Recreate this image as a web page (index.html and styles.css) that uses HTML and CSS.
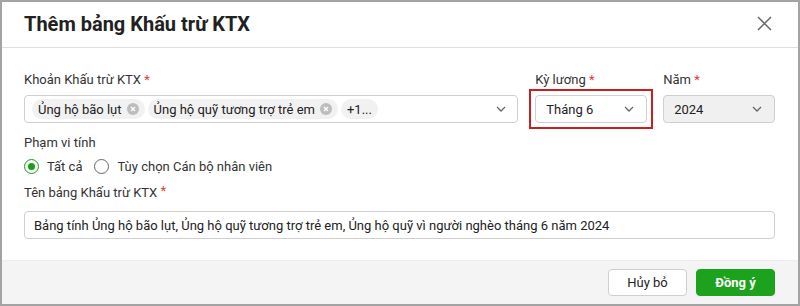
FILE: index.html
```html
<!DOCTYPE html>
<html lang="vi">
<head>
<meta charset="utf-8">
<link rel="stylesheet" href="styles.css">
</head>
<body>
<div class="dialog">
  <div class="header">
    <div class="title">Thêm bảng Khấu trừ KTX</div>
    <button class="close" aria-label="Đóng">
      <svg width="15" height="15" viewBox="0 0 15 15"><path d="M1 1L14 14M14 1L1 14" stroke="#666" stroke-width="1.5" fill="none"/></svg>
    </button>
  </div>
  <div class="body">
    <div class="row">
      <div class="field f-main">
        <div class="label">Khoản Khấu trừ KTX <span class="req">*</span></div>
        <div class="select multi">
          <div class="chips">
            <span class="chip">Ủng hộ bão lụt <span class="chip-x"><svg width="12" height="12" viewBox="0 0 12 12"><circle cx="6" cy="6" r="6" fill="#bdbdbd"/><path d="M4 4L8 8M8 4L4 8" stroke="#fff" stroke-width="1.3"/></svg></span></span>
            <span class="chip">Ủng hộ quỹ tương trợ trẻ em <span class="chip-x"><svg width="12" height="12" viewBox="0 0 12 12"><circle cx="6" cy="6" r="6" fill="#bdbdbd"/><path d="M4 4L8 8M8 4L4 8" stroke="#fff" stroke-width="1.3"/></svg></span></span>
            <span class="chip more">+1...</span>
          </div>
          <svg class="chev" width="10" height="6" viewBox="0 0 10 6"><path d="M1 1L5 5L9 1" stroke="#666" stroke-width="1.3" fill="none"/></svg>
        </div>
      </div>
      <div class="field f-small">
        <div class="label">Kỳ lương <span class="req">*</span></div>
        <div class="hl-wrap">
          <div class="select">
            <span class="val">Tháng 6</span>
            <svg class="chev" width="10" height="6" viewBox="0 0 10 6"><path d="M1 1L5 5L9 1" stroke="#666" stroke-width="1.3" fill="none"/></svg>
          </div>
        </div>
      </div>
      <div class="field f-small">
        <div class="label">Năm <span class="req">*</span></div>
        <div class="select disabled">
          <span class="val">2024</span>
          <svg class="chev" width="10" height="6" viewBox="0 0 10 6"><path d="M1 1L5 5L9 1" stroke="#666" stroke-width="1.3" fill="none"/></svg>
        </div>
      </div>
    </div>
    <div class="label scope">Phạm vi tính</div>
    <div class="radios">
      <label class="radio"><span class="dot checked"></span>Tất cả</label>
      <label class="radio"><span class="dot"></span>Tùy chọn Cán bộ nhân viên</label>
    </div>
    <div class="label name">Tên bảng Khấu trừ KTX <span class="req sup">*</span></div>
    <div class="input">Bảng tính Ủng hộ bão lụt, Ủng hộ quỹ tương trợ trẻ em, Ủng hộ quỹ vì người nghèo tháng 6 năm 2024</div>
  </div>
  <div class="footer">
    <button class="btn cancel">Hủy bỏ</button>
    <button class="btn ok">Đồng ý</button>
  </div>
</div>
</body>
</html>
```
FILE: styles.css
```css
* { box-sizing: border-box; }
html, body { margin: 0; padding: 0; }
body {
  font-family: Roboto, "Noto Sans", Arial, sans-serif;
  font-size: 13px;
  color: #222;
  background: #a3a3a3;
}
.dialog {
  width: 800px;
  height: 306px;
  border: 2px solid #a3a3a3;
  background: #fff;
  display: flex;
  flex-direction: column;
}
.header {
  height: 46px;
  border-bottom: 1px solid #e0e0e0;
  display: flex;
  align-items: center;
  justify-content: space-between;
  padding: 0 26px 0 22px;
}
.title {
  font-size: 20px;
  font-weight: 700;
  color: #212121;
  margin-top: -2px;
}
.close {
  border: 0;
  background: none;
  padding: 0;
  width: 15px;
  height: 15px;
  display: flex;
  margin-top: -2px;
}
.body {
  flex: 1;
  padding: 24px 23px 0 22px;
}
.row {
  display: flex;
  gap: 16px;
}
.f-main { width: 495px; margin-right: 1px; }
.f-small { width: 112px; }
.label {
  line-height: 16px;
  color: #333;
  margin-bottom: 7px;
}
.req { color: #e53935; }
.req.sup { vertical-align: 2px; }
.select {
  height: 28px;
  border: 1px solid #cfcfcf;
  border-radius: 4px;
  display: flex;
  align-items: center;
  justify-content: space-between;
  padding: 0 12px 0 10px;
  color: #222;
  background: #fff;
}
.select.multi { padding-left: 7px; padding-right: 11px; }
.hl-wrap {
  margin: -6px;
  padding: 4px;
  border: 2px solid #c8201e;
}
.select.disabled { background: #f0f0f0; }
.chips { display: flex; gap: 3px; }
.chip {
  display: inline-flex;
  align-items: center;
  height: 20px;
  padding: 0 6px 0 6px;
  border-radius: 10px;
  background: #f1f1f1;
  color: #222;
  gap: 5px;
}
.chip-x { display: flex; }
.chip.more { padding: 0 6px; }
.scope { margin-top: 12px; margin-bottom: 6px; }
.radios {
  display: flex;
  gap: 12px;
  height: 18px;
  align-items: center;
}
.radio {
  display: flex;
  align-items: center;
  gap: 8px;
  color: #333;
}
.dot {
  width: 15px;
  height: 15px;
  border-radius: 50%;
  border: 1px solid #666;
  background: #fff;
  display: inline-block;
  position: relative;
}
.dot.checked { border-color: #1a9d1a; }
.dot.checked::after {
  content: "";
  position: absolute;
  left: 3px; top: 3px;
  width: 7px; height: 7px;
  border-radius: 50%;
  background: #1a9d1a;
}
.name { margin-top: 8px; margin-bottom: 10px; }
.input {
  height: 28px;
  border: 1px solid #cfcfcf;
  border-radius: 4px;
  display: flex;
  align-items: center;
  padding: 0 9px;
  color: #222;
}
.footer {
  height: 44px;
  background: #f4f4f4;
  border-top: 1px solid #ececec;
  display: flex;
  justify-content: flex-end;
  align-items: center;
  gap: 9px;
  padding: 0 23px 0 0;
}
.btn {
  width: 79px;
  height: 27px;
  border-radius: 4px;
  font-family: Roboto, "Noto Sans", Arial, sans-serif;
  font-size: 13px;
}
.cancel {
  background: #fff;
  border: 1px solid #cfcfcf;
  color: #222;
}
.ok {
  background: #1ca21c;
  border: 1px solid #1ca21c;
  color: #fff;
  font-weight: 700;
}
```
